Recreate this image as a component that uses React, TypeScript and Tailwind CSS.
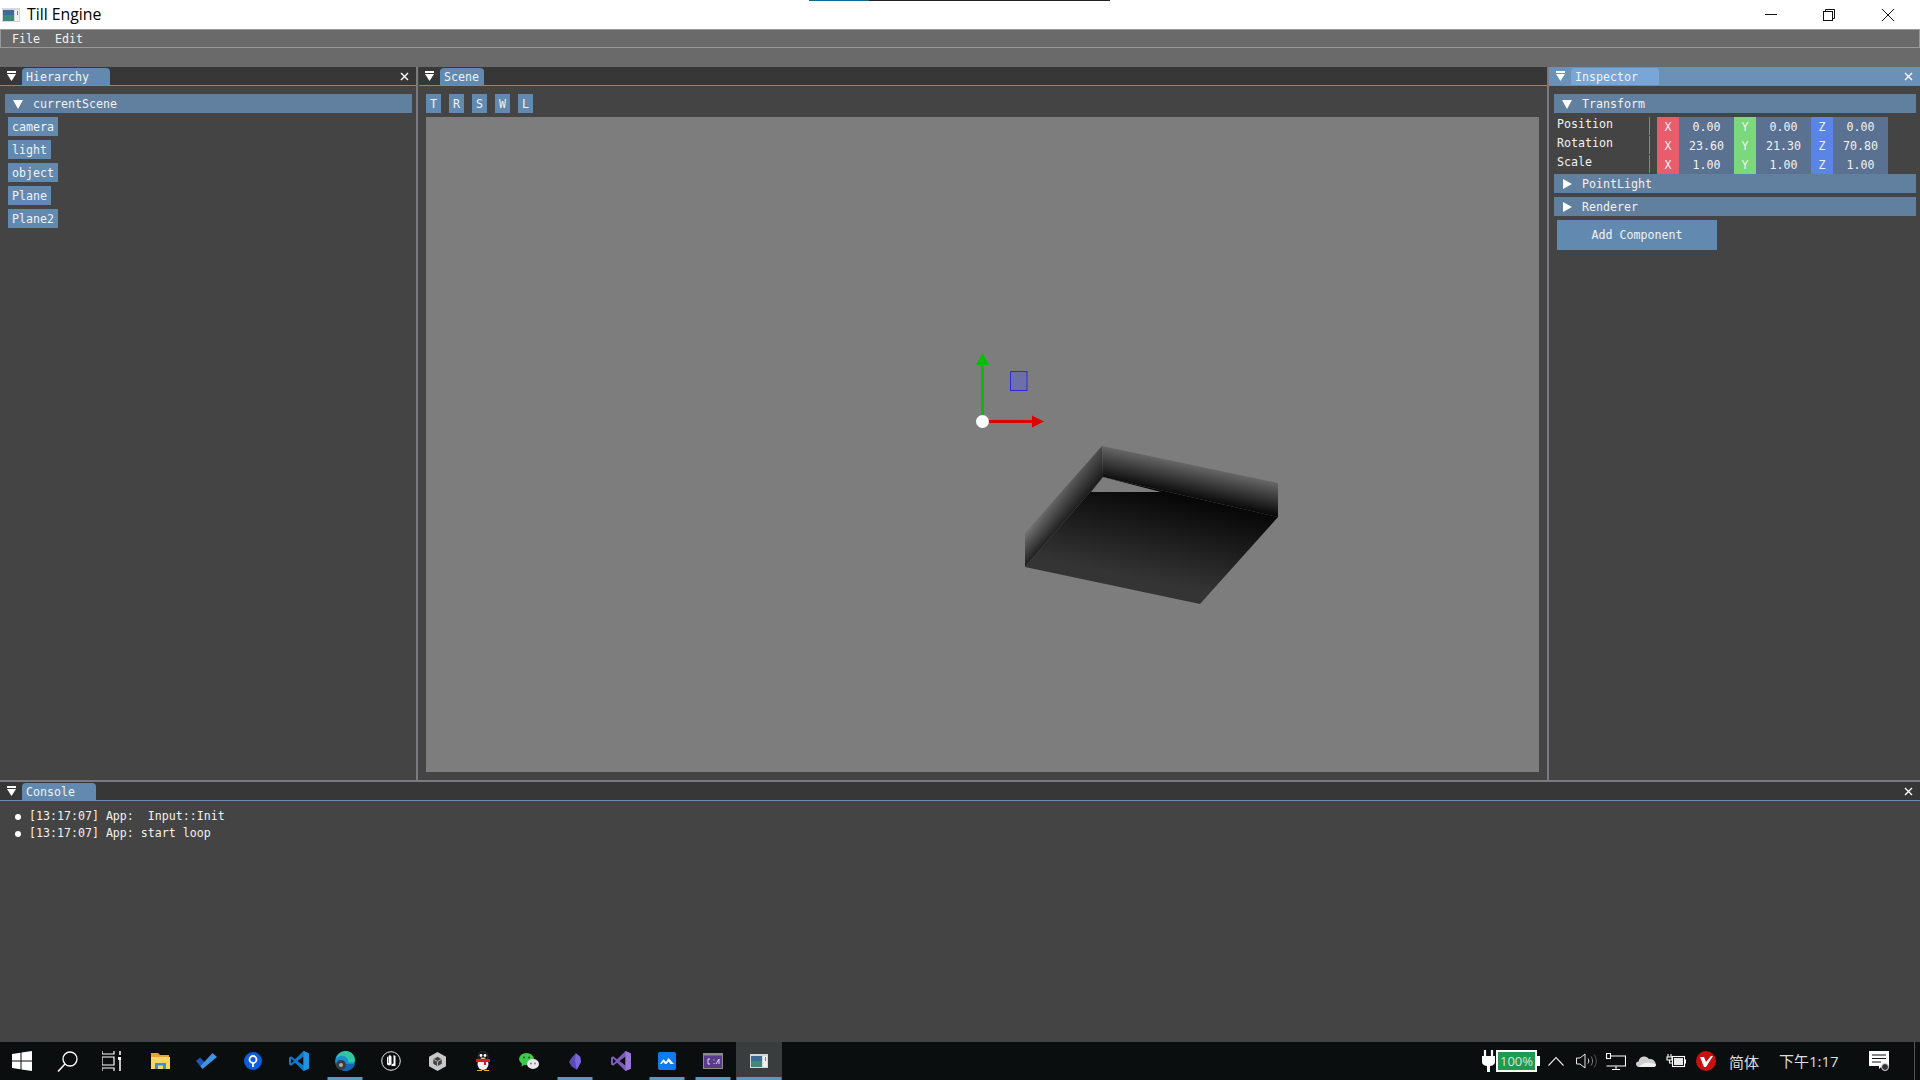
import React from "react";

const mono = "font-['DejaVu_Sans_Mono',monospace] text-[11.62px] leading-none";

const Tri = ({ down, size = 10 }: { down?: boolean; size?: number }) => (
  <svg width={size} height={size} viewBox="0 0 10 10" className="shrink-0 -mt-[2px]">
    <path d={down ? "M0 1H10L5 10Z" : "M1 0L10 5L1 10Z"} fill="#fff" />
  </svg>
);

const DockIcon = () => (
  <svg width="9" height="10" viewBox="0 0 9 10" className="shrink-0">
    <rect x="0" y="0" width="9" height="2" fill="#fff" />
    <path d="M0 3H9L4.5 10Z" fill="#fff" />
  </svg>
);

const CloseIcon = () => (
  <svg width="9" height="9" viewBox="0 0 9 9" className="shrink-0">
    <path d="M1 1L8 8M8 1L1 8" stroke="#fff" strokeWidth="1.4" />
  </svg>
);

const PanelHeader = ({
  title,
  tabW,
  dockW = "w-[22px]",
  active,
  close = true,
}: {
  title: string;
  tabW: string;
  dockW?: string;
  active?: boolean;
  close?: boolean;
}) => (
  <div
    className={`h-[19px] shrink-0 flex items-end border-b border-[#6d8db0] ${
      active ? "bg-[#6c91b8]" : "bg-[#373737]"
    }`}
  >
    <div className={`${dockW} h-[18px] flex items-center justify-center shrink-0`}>
      <DockIcon />
    </div>
    <div
      className={`${tabW} h-[17px] pt-[2px] rounded-t-[4px] flex items-center pl-[4px] text-[#f2f2f2] ${mono} ${
        active ? "bg-[#78a6d6]" : "bg-[#628ab0]"
      }`}
    >
      {title}
    </div>
    <div className="flex-1" />
    {close && (
      <div className="h-[18px] flex items-center pr-[7px]">
        <CloseIcon />
      </div>
    )}
  </div>
);

const TreeBar = ({ label, open }: { label: string; open?: boolean }) => (
  <div className={`h-[19px] pt-[2px] bg-[#617f9e] flex items-center pl-[8px] text-[#f2f2f2] ${mono}`}>
    <Tri down={open} />
    <span className="ml-[10px]">{label}</span>
  </div>
);

const SmallButton = ({ label, w }: { label: string; w: string }) => (
  <div className={`${w} h-[19px] pt-[2px] bg-[#628ab0] flex items-center justify-center text-[#f2f2f2] ${mono}`}>
    {label}
  </div>
);

const Field = ({ axis, color, value }: { axis: string; color: string; value: string }) => (
  <>
    <div className={`w-[22px] h-[19px] pt-[2px] ${color} flex items-center justify-center text-[#f2f2f2] ${mono}`}>
      {axis}
    </div>
    <div className={`w-[55px] h-[19px] pt-[2px] bg-[#5b7191] flex items-center justify-center text-[#f2f2f2] ${mono}`}>
      {value}
    </div>
  </>
);

const transformRows = [
  { label: "Position", values: ["0.00", "0.00", "0.00"] },
  { label: "Rotation", values: ["23.60", "21.30", "70.80"] },
  { label: "Scale", values: ["1.00", "1.00", "1.00"] },
];

const Gizmo = () => (
  <svg className="absolute left-0 top-0" width="1113" height="655" viewBox="426 117 1113 655">
    <defs>
      <linearGradient id="backWall" gradientUnits="userSpaceOnUse" x1="1195" y1="465" x2="1188" y2="498">
        <stop offset="0" stopColor="#686868" />
        <stop offset="1" stopColor="#060606" />
      </linearGradient>
      <linearGradient id="leftWall" gradientUnits="userSpaceOnUse" x1="1050" y1="505" x2="1067" y2="520">
        <stop offset="0" stopColor="#727272" />
        <stop offset="1" stopColor="#1e1e1e" />
      </linearGradient>
      <linearGradient id="leftShade" gradientUnits="userSpaceOnUse" x1="1102" y1="446" x2="1030" y2="530">
        <stop offset="0" stopColor="#000" stopOpacity="0.35" />
        <stop offset="1" stopColor="#000" stopOpacity="0" />
      </linearGradient>
      <linearGradient id="floor" gradientUnits="userSpaceOnUse" x1="1190" y1="497" x2="1172" y2="585">
        <stop offset="0" stopColor="#060606" />
        <stop offset="1" stopColor="#343434" />
      </linearGradient>
    </defs>
    <path d="M1103 477L1278 517L1200 604L1025 567Z" fill="url(#floor)" />
    <path d="M1102 446L1103 477L1025 567L1025 533Z" fill="url(#leftWall)" />
    <path d="M1102 446L1103 477L1025 567L1025 533Z" fill="url(#leftShade)" />
    <path d="M1102 446L1278 483L1278 517L1103 477Z" fill="url(#backWall)" />
    <path d="M1091 492L1103 477L1161 492Z" fill="#7d7d7d" />
    <rect x="1010.5" y="371.5" width="16.5" height="19" fill="#6f6fa8" stroke="#2a2ae0" />
    <path d="M982.500 421V362" stroke="#00c000" strokeWidth="3" />
    <path d="M982.500 353L989 365H976Z" fill="#00c000" />
    <path d="M982 421.500H1034" stroke="#e00000" strokeWidth="3" />
    <path d="M1044 421.500L1032 415.500V427.500Z" fill="#e00000" />
    <circle cx="982.500" cy="421.500" r="6.500" fill="#fff" />
  </svg>
);

const WinLogo = () => (
  <svg width="20" height="20" viewBox="0 0 20 20">
    <path d="M0 3L8.500 1.800V9.500H0ZM9.500 1.600L20 0V9.500H9.500ZM0 10.500H8.500V18.200L0 17ZM9.500 10.500H20V20L9.500 18.400Z" fill="#fff" />
  </svg>
);

const SearchIcon = () => (
  <svg width="21" height="21" viewBox="0 0 21 21" fill="none" stroke="#fff" strokeWidth="1.300">
    <circle cx="13" cy="8" r="7" />
    <path d="M8 13L1 20.500" strokeWidth="1.500" />
  </svg>
);

const TaskViewIcon = () => (
  <svg width="20" height="20" viewBox="0 0 20 20" fill="none" stroke="#fff" strokeWidth="1.200">
    <path d="M0 3H12V0M0 3V0M0 6H12V14H0ZM0 20V17H12V20" />
    <path d="M18 0V4M18 9V20" strokeWidth="1.500" />
    <rect x="16" y="6" width="3" height="3" fill="#fff" stroke="none" />
  </svg>
);

const FolderIcon = () => (
  <svg width="20" height="18" viewBox="0 0 20 18">
    <path d="M0 1H7L9 3H18V6H0Z" fill="#e2a92c" />
    <path d="M0 5H19V17H0Z" fill="#fbd661" />
    <path d="M4 17V11H15V17H12V13.500H7V17Z" fill="#3a90d8" />
  </svg>
);

const TodoIcon = () => (
  <svg width="22" height="18" viewBox="0 0 22 18">
    <path d="M0 9L4 5.500L9 10.500L6.500 17Z" fill="#1f58b0" />
    <path d="M6.500 17L4.500 14L16.500 1L21 5Z" fill="#3f93e6" />
  </svg>
);

const PinIcon = () => (
  <svg width="18" height="18" viewBox="0 0 18 18">
    <circle cx="9" cy="9" r="9" fill="#0b5ee0" />
    <circle cx="9" cy="7.500" r="3.500" fill="none" stroke="#fff" strokeWidth="1.800" />
    <path d="M9 11V15" stroke="#fff" strokeWidth="1.800" />
  </svg>
);

const VsCodeIcon = ({ a, b }: { a: string; b: string }) => (
  <svg width="20" height="20" viewBox="0 0 20 20">
    <path d="M14.500 0L20 2.500V17.500L14.500 20L6 11.800L2.200 14.800L0 13.600V6.400L2.200 5.200L6 8.200Z" fill={a} />
    <path d="M14.500 5.500L8.500 10L14.500 14.500Z" fill="#0b0e0e" />
    <path d="M2 7.500L5 10L2 12.500Z" fill="#0b0e0e" />
    <path d="M14.500 0L20 2.500V17.500L14.500 20Z" fill={b} />
  </svg>
);

const EdgeIcon = () => (
  <svg width="20" height="20" viewBox="0 0 20 20">
    <circle cx="10" cy="10" r="10" fill="#1b8fd0" />
    <path d="M1 8C3 2 8 0 11 0C16 0 20 4 20 9C20 12 16 12 13 11C14 7 9 4 5 5C3 6 2 7 1 8Z" fill="#2fc9a0" />
    <path d="M12 13H20C19 17 15 20 11 20C8 20 6 18 5 15Z" fill="#1565b0" />
    <circle cx="6" cy="14" r="5" fill="#3b3b42" />
    <circle cx="6" cy="14" r="2" fill="#aaa" />
  </svg>
);

const UnrealIcon = () => (
  <svg width="20" height="20" viewBox="0 0 20 20" fill="none">
    <circle cx="10" cy="10" r="9.300" stroke="#e8e8e8" strokeWidth="1" />
    <path d="M6 6.500V12.500C6 14.500 8 15 9.500 14L10.500 13V15H14.500V5L12.500 4V12.500L10.500 13.500V5.500L9 4L7.500 5V12L7 12V5.500Z" fill="#fff" />
  </svg>
);

const UnityIcon = () => (
  <svg width="17" height="19" viewBox="0 0 18 20">
    <path d="M9 0L18 5V15L9 20L0 15V5Z" fill="#c8c8c8" />
    <path d="M9 5L13.500 7.500V12.500L9 15L4.500 12.500V7.500Z" fill="#444" />
    <path d="M9 10L13.500 7.500M9 10V15M9 10L4.500 7.500" stroke="#bbb" strokeWidth="1" />
  </svg>
);

const QQIcon = () => (
  <svg width="16" height="20" viewBox="0 0 16 20">
    <ellipse cx="8" cy="6" rx="5" ry="6" fill="#161616" stroke="#333" />
    <ellipse cx="8" cy="13" rx="5.500" ry="6" fill="#f4f4f4" />
    <circle cx="6" cy="4.500" r="1.400" fill="#fff" />
    <circle cx="10" cy="4.500" r="1.400" fill="#fff" />
    <path d="M1 8H15V11H11V14H9V11H1Z" fill="#d81e1e" />
    <path d="M5.500 6.500H10.500L8 8Z" fill="#f6b01e" />
    <path d="M2 19H7V20H2ZM9 19H14V20H9Z" fill="#f6b01e" />
  </svg>
);

const WeChatIcon = () => (
  <svg width="20" height="17" viewBox="0 0 20 17">
    <ellipse cx="7.500" cy="6" rx="7.500" ry="6" fill="#3fc94a" />
    <path d="M3 10L2.500 13.500L7 11Z" fill="#3fc94a" />
    <ellipse cx="14" cy="11" rx="6" ry="5" fill="#e8e8e8" />
    <circle cx="12" cy="10.500" r="0.900" fill="#777" />
    <circle cx="16" cy="10.500" r="0.900" fill="#777" />
    <circle cx="5" cy="4.500" r="1" fill="#0b6b1a" />
    <circle cx="10" cy="4.500" r="1" fill="#0b6b1a" />
  </svg>
);

const ObsidianIcon = () => (
  <svg width="12" height="19" viewBox="0 0 14 19">
    <path d="M8 0L13 4L14 10L9 19L3 15L0 10L3 5Z" fill="#5a49b8" />
    <path d="M8 0L13 4L14 10L9 19L7 8Z" fill="#7a68d8" />
  </svg>
);

const BoardIcon = () => (
  <svg width="18" height="18" viewBox="0 0 18 18">
    <rect width="18" height="18" rx="2" fill="#0f7bf2" />
    <path d="M2 12L5.500 7L8 10L10.500 6L16 12H12.500L10.500 9.500L8.500 12H7L5.500 10L3.500 12Z" fill="#fff" />
  </svg>
);

const CmdIcon = () => (
  <svg width="20" height="16" viewBox="0 0 20 16">
    <rect width="20" height="16" fill="#8a8a8a" />
    <rect x="1" y="2.500" width="18" height="12.500" fill="#5a3a8c" />
    <path d="M7 6H5V11H7M11 6.500V7.500M11 10V11M13 11L16 6M16 6V11" fill="none" stroke="#ddd" strokeWidth="1" />
  </svg>
);

const TillIcon = ({ w = 18, h = 14 }: { w?: number; h?: number }) => (
  <svg width={w} height={h} viewBox="0 0 18 14">
    <rect width="18" height="14" fill="#d5d8d8" />
    <rect x="1" y="2" width="11" height="11" fill="#3d8a7a" />
    <rect x="1" y="2" width="11" height="5" fill="#3c6a9a" />
    <rect x="13" y="2" width="4" height="11" fill="#f0f2f2" />
    <rect x="15" y="3" width="1" height="4" fill="#4a90a0" />
  </svg>
);

const appIcons: { key: string; bar?: string; hl?: boolean; icon: React.ReactNode }[] = [
  { key: "folder", icon: <FolderIcon /> },
  { key: "todo", icon: <TodoIcon /> },
  { key: "pin", icon: <PinIcon /> },
  { key: "code", icon: <VsCodeIcon a="#0f78c8" b="#1a95e0" /> },
  { key: "edge", bar: "w-[35px]", icon: <EdgeIcon /> },
  { key: "unreal", icon: <UnrealIcon /> },
  { key: "unity", icon: <UnityIcon /> },
  { key: "qq", icon: <QQIcon /> },
  { key: "wechat", icon: <WeChatIcon /> },
  { key: "obsidian", bar: "w-[35px]", icon: <ObsidianIcon /> },
  { key: "vs", icon: <VsCodeIcon a="#7d5bb8" b="#9a78d8" /> },
  { key: "board", bar: "w-[35px]", icon: <BoardIcon /> },
  { key: "cmd", bar: "w-[35px]", icon: <CmdIcon /> },
  { key: "till", bar: "w-[45px]", hl: true, icon: <TillIcon /> },
];

const Tray = () => (
  <div className="flex items-center h-full">
    <svg width="13" height="22" viewBox="0 0 13 22">
      <path d="M3 0V6M10 0V6" stroke="#fff" strokeWidth="2.200" />
      <path d="M0 6H13V12C13 15 9 16 8 16V22H5V16C4 16 0 15 0 12Z" fill="#fff" />
    </svg>
    <div className="ml-px w-[44px] h-[22px] flex items-center">
      <div className="w-[41px] h-[22px] border-[2px] border-white bg-[#1f9a50] flex items-center justify-center font-['Open_Sans',sans-serif] text-[13px] leading-none text-[#d8e8d8]">
        100%
      </div>
      <div className="w-[3px] h-[10px] bg-white" />
    </div>
    <svg width="16" height="10" viewBox="0 0 16 10" className="ml-[8px]" fill="none" stroke="#e8e8e8" strokeWidth="1.100">
      <path d="M0.500 9.500L8 1.500L15.500 9.500" />
    </svg>
    <svg width="21" height="18" viewBox="0 0 21 18" className="ml-[12px]" fill="none" stroke="#e8e8e8" strokeWidth="1">
      <path d="M0.500 6V12H4L9 16V2L4 6Z" />
      <path d="M12 6.500C13 8 13 10 12 11.500" />
      <path d="M15 4.500C17 7 17 11 15 13.500" stroke="#888" />
      <path d="M18 2.500C21 6 21 12 18 15.500" stroke="#555" />
    </svg>
    <svg width="20" height="17" viewBox="0 0 20 17" className="ml-[9px]" fill="none" stroke="#fff" strokeWidth="1.100">
      <path d="M3 3H19.500V13H0.500" />
      <path d="M10 13V16M6 16.500H14" />
      <rect x="0.500" y="0.500" width="4" height="5" fill="#0b0e0e" />
    </svg>
    <svg width="20" height="12" viewBox="0 0 20 12" className="ml-[10px]">
      <path d="M3 12C1 12 0 10.500 0 9C0 7.500 1 6.500 2.500 6.500C3 3 6 1 9 1.500C11 2 12 3 13 4C16 3.500 19 5 20 9.500C20 11 19 12 17.500 12Z" fill="#cfcfcf" />
      <path d="M3 12C6 8 10 6 20 9.500C20 11 19 12 17.500 12Z" fill="#f0f0f0" />
    </svg>
    <svg width="20" height="14" viewBox="0 0 20 14" className="ml-[10px]" fill="none" stroke="#fff" strokeWidth="1.100">
      <path d="M2 0V3M5 0V3M1 3H6V6H1ZM3.500 6V9H6" />
      <rect x="6.500" y="2.500" width="12" height="10" />
      <rect x="8" y="4" width="9" height="7" fill="#e8e8e8" stroke="none" />
      <rect x="19" y="5.500" width="1" height="4" fill="#fff" stroke="none" />
    </svg>
    <svg width="20" height="20" viewBox="0 0 20 20" className="ml-[10px]">
      <circle cx="10" cy="10" r="10" fill="#c81010" />
      <path d="M4 6H8L10 11L15 5H17L10 16H8Z" fill="#fff" />
    </svg>
    <span className="ml-[13px] w-[30px] font-['Noto_Sans_CJK_SC',sans-serif] text-[15px] leading-none text-[#dcdcdc]">
      简体
    </span>
    <span className="ml-[20px] w-[61px] whitespace-nowrap font-['Open_Sans','Noto_Sans_CJK_SC',sans-serif] text-[15px] leading-none text-[#dcdcdc]">
      下午1:17
    </span>
    <svg width="20" height="20" viewBox="0 0 20 20" className="ml-[29px]">
      <path d="M0 0H20V15H13L10 18V15H0Z" fill="#fff" />
      <path d="M3 4H17M3 7.500H17M3 11H12" stroke="#111" strokeWidth="1.200" />
      <circle cx="16" cy="16" r="3.500" fill="#333" stroke="#ddd" />
    </svg>
    <div className="ml-[25px] w-px h-full bg-[#555]" />
    <div className="w-[5px]" />
  </div>
);

const App = () => (
  <div className="w-[1920px] h-[1080px] flex flex-col overflow-hidden bg-[#444444]">
    {/* window title */}
    <div className="h-[29px] shrink-0 bg-white flex items-center relative">
      <div className="absolute top-0 left-[809px] w-[301px] h-px flex">
        <div className="w-[60px] bg-[#0f6a94]" />
        <div className="flex-1 bg-[#222222]" />
      </div>
      <div className="ml-[2px]">
        <TillIcon />
      </div>
      <span className="ml-[7px] font-['Open_Sans',sans-serif] text-[15.8px] leading-none text-black">Till Engine</span>
      <div className="flex-1" />
      <svg width="12" height="2" viewBox="0 0 12 2" className="mr-[46px]">
        <rect width="12" height="1" fill="#111" />
      </svg>
      <svg width="12" height="12" viewBox="0 0 12 12" className="mr-[47px]" fill="none" stroke="#111">
        <rect x="0.500" y="2.500" width="9" height="9" />
        <path d="M2.500 2.500V0.500H11.500V9.500H9.500" />
      </svg>
      <svg width="12" height="12" viewBox="0 0 12 12" className="mr-[26px]" fill="none" stroke="#111">
        <path d="M0 0L12 12M12 0L0 12" />
      </svg>
    </div>

    {/* menu */}
    <div className="h-[19px] shrink-0 bg-[#6a6a6a] border border-[#999999] flex items-center pl-[11px] pt-[2px] gap-[15px] text-[#f2f2f2]">
      <span className={mono}>File</span>
      <span className={mono}>Edit</span>
    </div>
    <div className="h-[19px] shrink-0 bg-[#6a6a6a]" />

    {/* panels */}
    <div className="h-[713px] shrink-0 flex">
      <div className="w-[416px] shrink-0 flex flex-col">
        <PanelHeader title="Hierarchy" tabW="w-[88px]" />
        <div className="flex-1 flex flex-col pt-[8px] pl-[5px] pr-[4px]">
          <TreeBar label="currentScene" open />
          <div className="flex flex-col gap-[4px] mt-[4px] pl-[3px]">
            <SmallButton label="camera" w="w-[50px]" />
            <SmallButton label="light" w="w-[43px]" />
            <SmallButton label="object" w="w-[50px]" />
            <SmallButton label="Plane" w="w-[43px]" />
            <SmallButton label="Plane2" w="w-[50px]" />
          </div>
        </div>
      </div>

      <div className="w-[2px] shrink-0 bg-[#7a7a80] mr-px" />

      <div className="w-[1128px] shrink-0 flex flex-col">
        <PanelHeader title="Scene" tabW="w-[44px]" dockW="w-[21px]" close={false} />
        <div className="flex-1 flex flex-col pt-[8px] pl-[7px] pr-[8px]">
          <div className="flex gap-[8px]">
            {["T", "R", "S", "W", "L"].map((k) => (
              <SmallButton key={k} label={k} w="w-[15px]" />
            ))}
          </div>
          <div className="relative mt-[4px] w-[1113px] h-[655px] bg-[#7d7d7d]">
            <Gizmo />
          </div>
        </div>
      </div>

      <div className="w-[2px] shrink-0 bg-[#7a7a80]" />

      <div className="flex-1 flex flex-col">
        <PanelHeader title="Inspector" tabW="w-[88px]" active />
        <div className="flex-1 flex flex-col pt-[8px] pl-[5px] pr-[4px]">
          <TreeBar label="Transform" open />
          <div className="mt-[4px] flex flex-col">
            {transformRows.map((row) => (
              <div key={row.label} className="flex h-[19px]">
                <div className={`w-[95px] pl-[3px] pt-[2px] text-[#f2f2f2] ${mono}`}>{row.label}</div>
                <div className="w-px h-[18px] bg-[#888888] mr-[7px]" />
                <Field axis="X" color="bg-[#e85c6c]" value={row.values[0]} />
                <Field axis="Y" color="bg-[#7bd87b]" value={row.values[1]} />
                <Field axis="Z" color="bg-[#5a84e6]" value={row.values[2]} />
              </div>
            ))}
          </div>
          <TreeBar label="PointLight" />
          <div className="mt-[4px]">
            <TreeBar label="Renderer" />
          </div>
          <div className={`mt-[4px] ml-[3px] w-[160px] h-[30px] pt-[2px] bg-[#628ab0] flex items-center justify-center text-[#f2f2f2] ${mono}`}>
            Add Component
          </div>
        </div>
      </div>
    </div>

    <div className="h-[2px] shrink-0 bg-[#7a7a80]" />

    {/* console */}
    <div className="flex-1 flex flex-col">
      <PanelHeader title="Console" tabW="w-[74px]" />
      <div className="pt-[10px] pl-[15px] flex flex-col gap-[6px] text-[#f2f2f2]">
        {["[13:17:07] App:  Input::Init", "[13:17:07] App: start loop"].map((line) => (
          <div key={line} className="flex items-center h-[11px]">
            <div className="w-[6px] h-[6px] rounded-full bg-white mr-[8px]" />
            <span className={`${mono} whitespace-pre`}>{line}</span>
          </div>
        ))}
      </div>
    </div>

    {/* taskbar */}
    <div className="h-[38px] shrink-0 bg-[#0b0e0e] flex items-center justify-between">
      <div className="flex items-center h-full">
        <div className="w-[44px] flex justify-center">
          <WinLogo />
        </div>
        <div className="w-[46px] flex justify-center">
          <SearchIcon />
        </div>
        <div className="w-[48px] flex justify-center pr-[4px]">
          <TaskViewIcon />
        </div>
        {appIcons.map((a) => (
          <div
            key={a.key}
            className={`w-[46px] h-full relative flex items-center justify-center ${a.hl ? "bg-[#3a3d3d]" : ""}`}
          >
            {a.icon}
            {a.bar && (
              <div className={`${a.bar} h-[3px] bg-[#5a9ab8] absolute bottom-0 left-1/2 -translate-x-1/2`} />
            )}
          </div>
        ))}
      </div>
      <Tray />
    </div>
  </div>
);

export default App;
